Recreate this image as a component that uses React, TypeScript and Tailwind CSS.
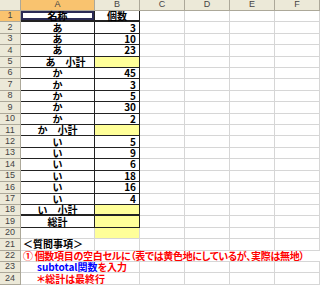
import React from "react";

type Row = {
  a?: string;
  b?: string;
  kind?: "head" | "item" | "sub" | "total";
  shift?: boolean;
};

const rows: Row[] = [
  { a: "名称", b: "個数", kind: "head" },
  { a: "あ", b: "3", kind: "item" },
  { a: "あ", b: "10", kind: "item" },
  { a: "あ", b: "23", kind: "item" },
  { a: "あ　小計", kind: "sub", shift: true },
  { a: "か", b: "45", kind: "item" },
  { a: "か", b: "3", kind: "item" },
  { a: "か", b: "5", kind: "item" },
  { a: "か", b: "30", kind: "item" },
  { a: "か", b: "2", kind: "item" },
  { a: "か　小計", kind: "sub" },
  { a: "い", b: "5", kind: "item" },
  { a: "い", b: "9", kind: "item" },
  { a: "い", b: "6", kind: "item" },
  { a: "い", b: "18", kind: "item" },
  { a: "い", b: "16", kind: "item" },
  { a: "い", b: "4", kind: "item" },
  { a: "い　小計", kind: "sub" },
  { a: "総計", kind: "total" },
];

const cols = ["A", "B", "C", "D", "E", "F"];
const widths = ["w-[74px]", "w-[45px]", "w-[45px]", "w-[45px]", "w-[45px]", "w-[45px]"];

const font = "font-['MS_PGothic','Noto_Sans_CJK_JP',sans-serif] [font-feature-settings:'palt']";

function RowHead({ n, active }: { n: number; active?: boolean }) {
  return (
    <div
      className={`w-[21px] shrink-0 h-full flex items-center justify-center border-r border-b border-[#aca899] text-[9px] text-[#444] font-['Liberation_Sans',sans-serif] ${
        active ? "bg-[#f9c36f]" : "bg-[#ece9d8]"
      }`}
    >
      {n}
    </div>
  );
}

function Blank({ w }: { w: string }) {
  return <div className={`${w} shrink-0 h-full border-r border-b border-[#d6d6d6] bg-white`} />;
}

export default function App() {
  return (
    <div className={`w-[320px] h-[285px] overflow-hidden bg-white ${font}`}>
      {/* column headers */}
      <div className="flex h-[11px]">
        <div className="w-[21px] shrink-0 h-full bg-[#ece9d8] border-r border-b border-[#aca899]" />
        {cols.map((c, i) => (
          <div
            key={c}
            className={`${widths[i]} shrink-0 h-full flex items-center justify-center border-r border-b border-[#aca899] text-[9px] text-[#444] font-['Liberation_Sans',sans-serif] ${
              i === 0 ? "bg-[#f9c36f]" : "bg-[#ece9d8]"
            }`}
          >
            {c}
          </div>
        ))}
      </div>

      {/* table rows 1-19 */}
      {rows.map((r, i) => {
        const n = i + 1;
        const yellow = r.kind === "sub" || r.kind === "total";
        const thick = n === 18 || n === 1;
        return (
          <div key={n} className="flex h-[11.42px]">
            <RowHead n={n} active={n === 1} />
            <div
              className={`w-[74px] shrink-0 h-full flex items-center justify-center border-r border-[#222] text-[10px] font-bold leading-none text-black ${
                thick ? "border-b-2" : "border-b"
              } ${n === 1 ? "shadow-[inset_0_0_0_2px_#2b2b55]" : ""} ${r.shift ? "pl-4" : ""}`}
            >
              {r.a}
            </div>
            <div
              className={`w-[45px] shrink-0 h-full flex items-center border-r border-[#222] text-[10px] font-bold leading-none text-black ${
                thick ? "border-b-2" : "border-b"
              } ${r.kind === "head" ? "justify-center" : "justify-end pr-[3px]"} ${yellow ? "bg-[#ffff99]" : "bg-white"}`}
            >
              {r.b}
            </div>
            {widths.slice(2).map((w, k) => (
              <Blank key={k} w={w} />
            ))}
          </div>
        );
      })}

      {/* row 20 */}
      <div className="flex h-[11.42px]">
        <RowHead n={20} />
        <Blank w="w-[74px]" />
        <div className="w-[45px] shrink-0 h-full bg-[#ffff99] border-r border-b border-[#d6d6d6]" />
        {widths.slice(2).map((w, k) => (
          <Blank key={k} w={w} />
        ))}
      </div>

      {/* row 21 */}
      <div className="flex h-[11.42px]">
        <RowHead n={21} />
        <div className="w-[74px] shrink-0 h-full flex items-center pl-[2px] border-r border-b border-[#d6d6d6] text-[10px] font-bold leading-none text-black whitespace-nowrap">
          ＜質問事項＞
        </div>
        {widths.slice(1).map((w, k) => (
          <Blank key={k} w={w} />
        ))}
      </div>

      {/* row 22 */}
      <div className="flex h-[11.42px]">
        <RowHead n={22} />
        <div className="w-[299px] shrink-0 h-full flex items-center pl-[2px] border-b border-[#d6d6d6] text-[10px] font-bold leading-none tracking-[-0.3px] text-[#ff0000] whitespace-nowrap">
          ① 個数項目の空白セルに（表では黄色地にしているが、実際は無地）
        </div>
      </div>

      {/* row 23 */}
      <div className="flex h-[11.42px]">
        <RowHead n={23} />
        <div className="w-[119px] shrink-0 h-full flex items-center pl-[16px] border-r border-b border-[#d6d6d6] text-[10px] font-bold leading-none whitespace-nowrap">
          <span className="text-[#0000ff]">subtotal関数</span>
          <span className="text-[#ff0000]">を入力</span>
        </div>
        {widths.slice(2).map((w, k) => (
          <Blank key={k} w={w} />
        ))}
      </div>

      {/* row 24 */}
      <div className="flex h-[11.42px]">
        <RowHead n={24} />
        <div className="w-[119px] shrink-0 h-full flex items-center pl-[16px] border-r border-b border-[#d6d6d6] text-[10px] font-bold leading-none text-[#ff0000] whitespace-nowrap">
          ＊総計は最終行
        </div>
        {widths.slice(2).map((w, k) => (
          <Blank key={k} w={w} />
        ))}
      </div>
    </div>
  );
}
